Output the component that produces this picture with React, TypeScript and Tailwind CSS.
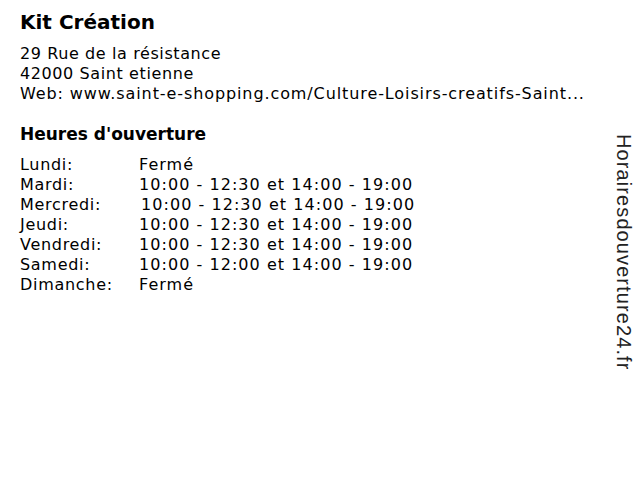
const hours: [string, string, string?][] = [
  ['Lundi:', 'Fermé'],
  ['Mardi:', '10:00 - 12:30 et 14:00 - 19:00'],
  ['Mercredi:', '10:00 - 12:30 et 14:00 - 19:00', 'pl-[2px]'],
  ['Jeudi:', '10:00 - 12:30 et 14:00 - 19:00'],
  ['Vendredi:', '10:00 - 12:30 et 14:00 - 19:00'],
  ['Samedi:', '10:00 - 12:00 et 14:00 - 19:00'],
  ['Dimanche:', 'Fermé'],
];

export default function App() {
  return (
    <div className="w-[640px] h-[480px] bg-white text-black flex overflow-hidden font-['DejaVu_Sans',sans-serif]">
      {/* Fiche magasin */}
      <div className="flex-1 pl-5 pt-[9px]">
        <h1 className="text-[20px] font-bold leading-[26px]">Kit Création</h1>
        <div className="mt-[9px] text-[16px] leading-[20px]">
          <div className="tracking-[0.6px]">29 Rue de la résistance</div>
          <div className="tracking-[0.6px]">42000 Saint etienne</div>
          <div className="whitespace-nowrap tracking-[0.9px]">
            Web: www.saint-e-shopping.com/Culture-Loisirs-creatifs-Saint...
          </div>
        </div>
        <h2 className="mt-[19px] text-[17px] font-bold leading-[22px]">Heures d'ouverture</h2>
        <div className="mt-[10px] text-[16px] leading-[20px]">
          {hours.map(([day, time, extra]) => (
            <div key={day} className="flex">
              <span className="w-[119px] whitespace-nowrap tracking-[0.7px]">{day}</span>
              <span className={`whitespace-nowrap tracking-[1.05px] ${extra ?? ''}`}>{time}</span>
            </div>
          ))}
        </div>
      </div>

      {/* Bandeau vertical */}
      <div className="w-[40px] pt-[134px] pl-[7px] flex justify-center">
        <span className="[writing-mode:vertical-rl] text-[20px] leading-none tracking-[1.1px] font-['Liberation_Sans',sans-serif] text-[#222]">
          Horairesdouverture24.fr
        </span>
      </div>
    </div>
  );
}
